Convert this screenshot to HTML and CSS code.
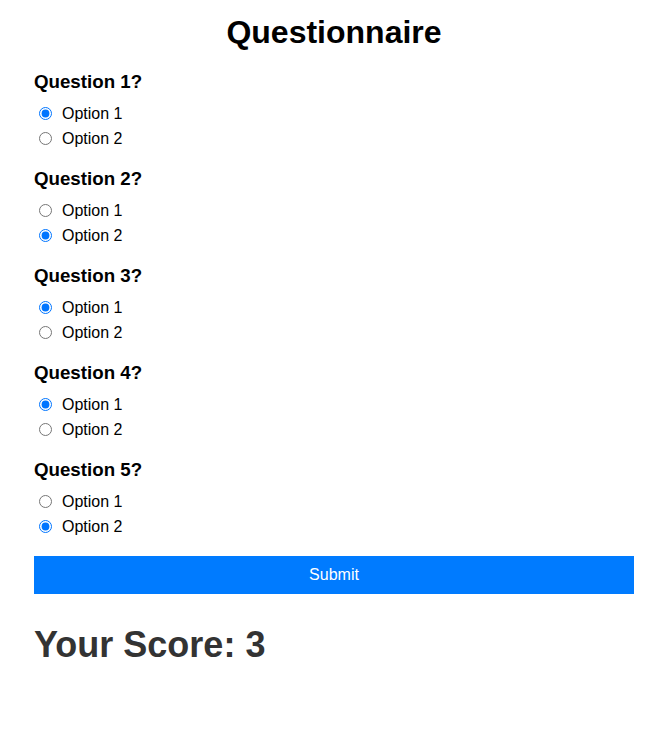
FILE: index.html
```html
<!DOCTYPE html>
<html>
<head>
<meta charset="utf-8">
<link rel="stylesheet" href="styles.css">
</head>
<body>
<div class="container">
  <h1 class="title">Questionnaire</h1>
  <form class="quiz">
    <div class="question">
      <h3 class="q-title">Question 1?</h3>
      <label class="option"><input type="radio" name="q1" checked> Option 1</label>
      <label class="option"><input type="radio" name="q1"> Option 2</label>
    </div>
    <div class="question">
      <h3 class="q-title">Question 2?</h3>
      <label class="option"><input type="radio" name="q2"> Option 1</label>
      <label class="option"><input type="radio" name="q2" checked> Option 2</label>
    </div>
    <div class="question">
      <h3 class="q-title">Question 3?</h3>
      <label class="option"><input type="radio" name="q3" checked> Option 1</label>
      <label class="option"><input type="radio" name="q3"> Option 2</label>
    </div>
    <div class="question">
      <h3 class="q-title">Question 4?</h3>
      <label class="option"><input type="radio" name="q4" checked> Option 1</label>
      <label class="option"><input type="radio" name="q4"> Option 2</label>
    </div>
    <div class="question">
      <h3 class="q-title">Question 5?</h3>
      <label class="option"><input type="radio" name="q5"> Option 1</label>
      <label class="option"><input type="radio" name="q5" checked> Option 2</label>
    </div>
    <button type="button" class="submit">Submit</button>
  </form>
  <h1 class="score">Your Score: 3</h1>
</div>
</body>
</html>
```
FILE: styles.css
```css
html, body {
  margin: 0;
  padding: 0;
  background: #fff;
}
body {
  font-family: "Liberation Sans", Arial, sans-serif;
  color: #000;
}
.container {
  width: 600px;
  padding: 14px 30px 0 34px;
}
.title {
  font-size: 32px;
  font-weight: bold;
  text-align: center;
  margin: 0 0 20px;
  line-height: 37px;
}
.question {
  margin-bottom: 17px;
}
.q-title {
  font-size: 18.72px;
  font-weight: bold;
  margin: 0 0 8px;
  line-height: 22px;
}
.option {
  display: flex;
  align-items: center;
  height: 25px;
  font-size: 16px;
}
.option input {
  margin: 0 10px 0 5px;
  width: 13px;
  height: 13px;
  accent-color: #0075ff;
}
.submit {
  display: block;
  width: 100%;
  height: 38px;
  margin-top: 17px;
  border: none;
  background: #007bff;
  color: #fff;
  font-family: "Liberation Sans", Arial, sans-serif;
  font-size: 16px;
}
.score {
  font-size: 36px;
  font-weight: bold;
  color: #333;
  margin: 30px 0 0;
  line-height: 42px;
}
```
